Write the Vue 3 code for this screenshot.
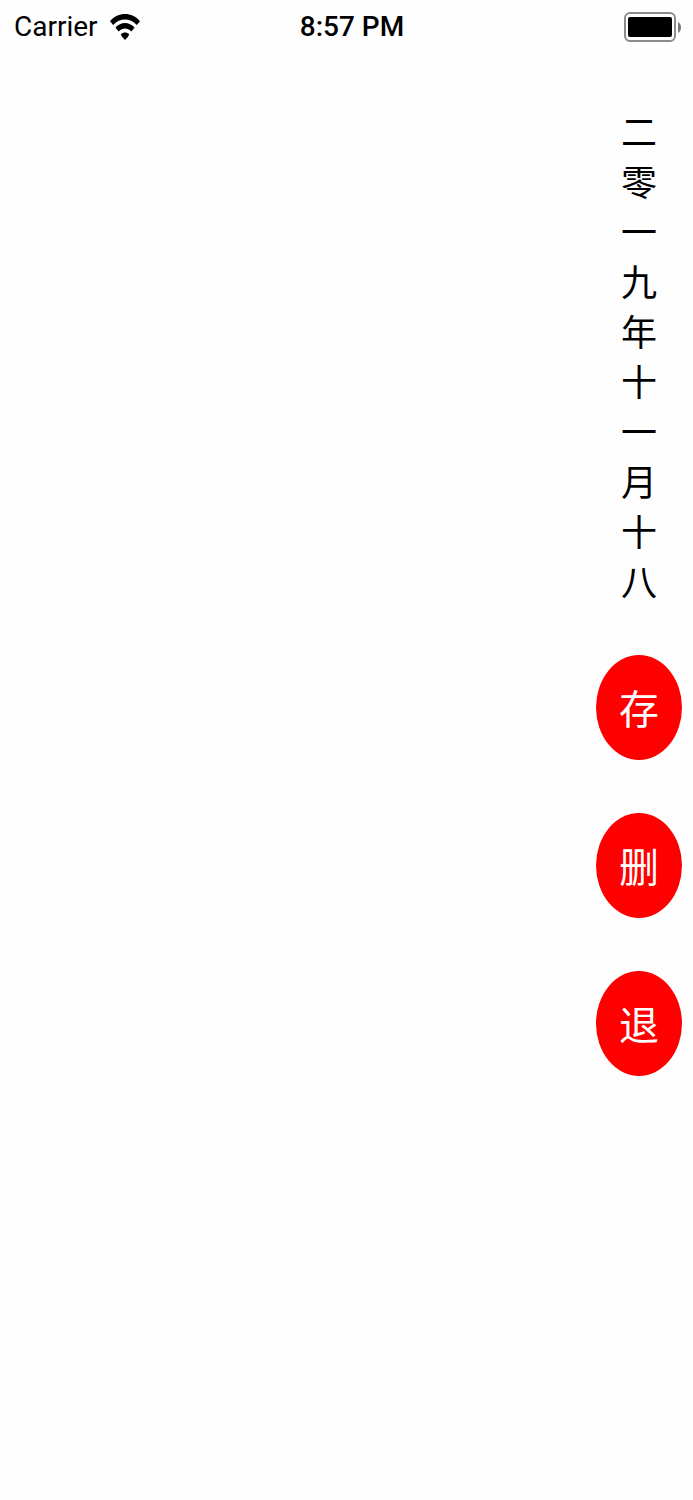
<template>
  <div class="screen">
    <header class="status-bar">
      <div class="carrier">
        <span>Carrier</span>
        <svg class="wifi" viewBox="0 0 30 26" aria-hidden="true">
          <path d="M0 7.2C8-2.4 22-2.4 30 7.2L26.8 11C20 3.8 10 3.8 3.2 11Z" />
          <path d="M5.4 13.6C11 7.4 19 7.4 24.6 13.6L21.4 17.4C17.5 13.4 12.5 13.4 8.6 17.4Z" />
          <path d="M10.8 20.4C13 18 17 18 19.2 20.4Q18.6 22.6 15 26Q11.4 22.6 10.8 20.4Z" />
        </svg>
      </div>
      <time class="clock">8:57 PM</time>
      <div class="power">
        <svg class="battery" viewBox="0 0 58 30" aria-hidden="true">
          <rect x="1" y="1" width="50" height="28" rx="5" fill="#fff" stroke="#8c8c8c" stroke-width="2" />
          <rect x="4" y="5" width="44" height="20" rx="2" fill="#000" />
          <path d="M54 10C58 12 58 19 54 21Z" fill="#777" />
        </svg>
      </div>
    </header>

    <main class="sidebar">
      <div class="date">
        <span v-for="(char, index) in date" :key="index">{{ char }}</span>
      </div>
      <div class="actions">
        <button v-for="action in actions" :key="action" type="button" class="action">
          {{ action }}
        </button>
      </div>
    </main>
  </div>
</template>

<script setup>
const date = [...'二零一九年十一月十八'];
const actions = ['存', '删', '退'];
</script>

<style>
body {
  margin: 0;
  background-color: #fefefe;
}
</style>

<style scoped>
.screen {
  min-height: 100vh;
  color: #000;
  font-family: Roboto, "Noto Sans CJK SC", sans-serif;
}

.status-bar {
  display: grid;
  grid-template-columns: 1fr auto 1fr;
  align-items: center;
  height: 54px;
  padding: 0 11px 0 14px;
  font-size: 28px;
  line-height: 36px;
}

.carrier {
  display: flex;
  align-items: center;
  gap: 12px;
}

.wifi {
  width: 30px;
  height: 26px;
}

.clock {
  padding-left: 8px;
  font-weight: 500;
}

.power {
  display: flex;
  justify-content: flex-end;
}

.battery {
  width: 58px;
  height: 30px;
}

.sidebar {
  display: flex;
  flex-direction: column;
  align-items: flex-end;
  gap: 50px;
  padding: 51px 11px 40px;
  font-family: "Noto Sans CJK SC", sans-serif;
  font-weight: 400;
}

.date {
  display: flex;
  flex-direction: column;
  align-items: center;
  width: 86px;
  font-size: 36px;
  line-height: 50px;
}

.actions {
  display: flex;
  flex-direction: column;
  gap: 53px;
}

.action {
  width: 86px;
  height: 105px;
  padding: 0 0 2px;
  border: none;
  border-radius: 50%;
  background-color: #f00;
  color: #fff;
  font-family: inherit;
  font-size: 40px;
  font-weight: inherit;
  cursor: pointer;
}
</style>
